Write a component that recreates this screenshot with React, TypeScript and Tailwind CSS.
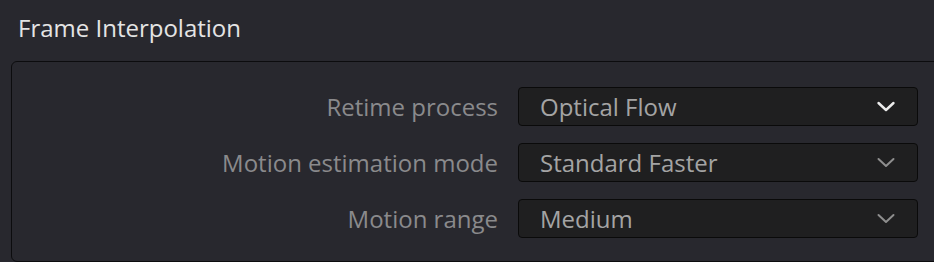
import React from "react";

const rows = [
  { label: "Retime process", value: "Optical Flow", active: true },
  { label: "Motion estimation mode", value: "Standard Faster", active: false },
  { label: "Motion range", value: "Medium", active: false },
];

function Chevron({ active }: { active: boolean }) {
  return (
    <svg width="20" height="12" viewBox="0 0 20 12" className={active ? "text-[#ececec]" : "text-[#8e8e8e]"}>
      <path d="M2.5 2 L10 9 L17.5 2" fill="none" stroke="currentColor" strokeWidth={active ? 2.4 : 2} strokeLinecap="round" strokeLinejoin="round" />
    </svg>
  );
}

export default function App() {
  return (
    <div className="w-[934px] h-[262px] overflow-hidden bg-[#28282e] font-['Open_Sans',sans-serif]">
      <div className="pl-[18px] pt-[11px] h-[61px] text-[24px] leading-[34px] text-[#e4e4e4]">Frame Interpolation</div>
      <div className="ml-[11px] w-[940px] h-[201px] border-[1.5px] border-[#0c0c0e] rounded-[6px] pt-[25px] flex flex-col gap-[17px]">
        {rows.map((r) => (
          <div key={r.label} className="flex items-center h-[39px]">
            <div className="w-[486px] text-right text-[24px] leading-[39px] text-[#8a8a8c]">{r.label}</div>
            <div className="ml-[20px] w-[400px] h-[39px] bg-[#1f1f20] border-[1.5px] border-[#0a0a0a] rounded-[4px] flex items-center justify-between pl-[21px] pr-[21px]">
              <span className="text-[24px] leading-[36px] text-[#a4a4a4]">{r.value}</span>
              <Chevron active={r.active} />
            </div>
          </div>
        ))}
      </div>
    </div>
  );
}
